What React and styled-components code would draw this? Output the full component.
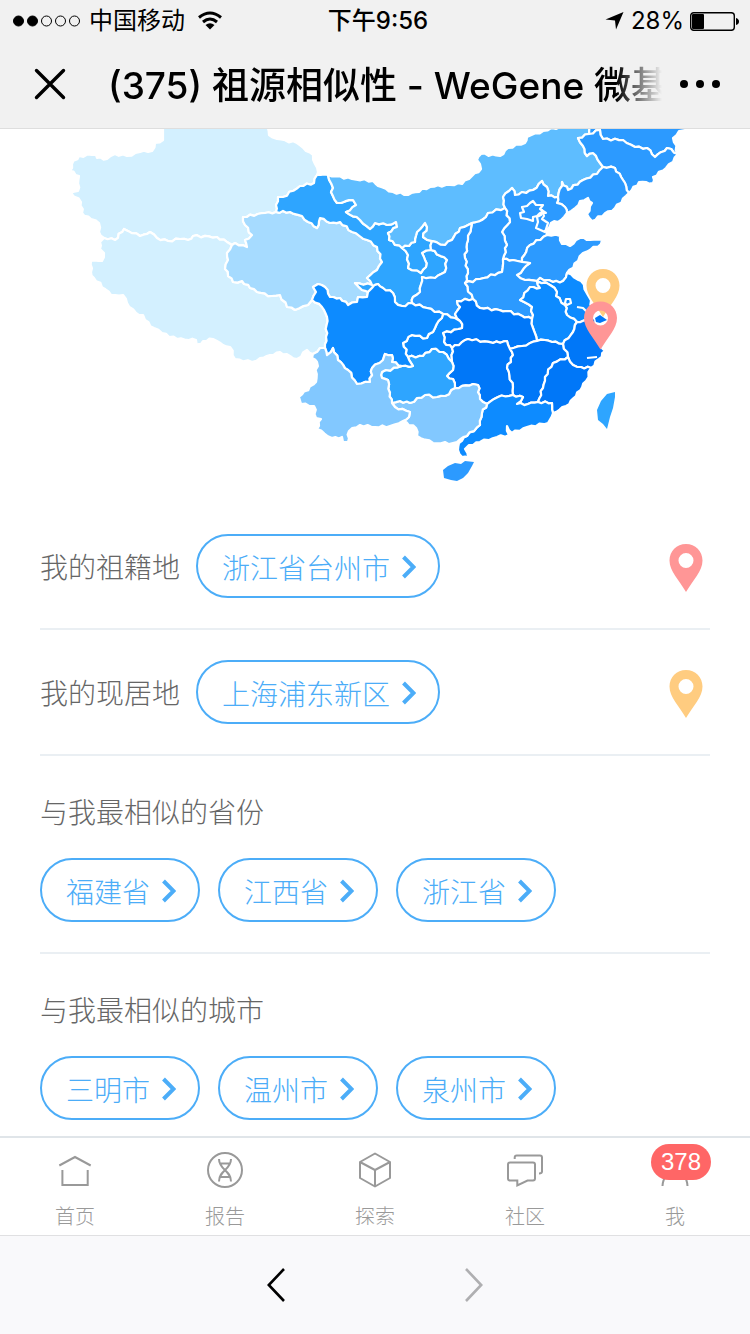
import React from "react";
import styled, { createGlobalStyle, css } from "styled-components";

const GlobalStyle = createGlobalStyle`
  * {
    box-sizing: border-box;
  }

  body {
    margin: 0;
    background: #fff;
    font-family: "Noto Sans CJK SC", sans-serif;
  }

  button {
    padding: 0;
    border: 0;
    background: none;
    font: inherit;
    color: inherit;
    cursor: pointer;
  }

  svg {
    display: block;
    flex-shrink: 0;
  }
`;

const Page = styled.div`
  display: flex;
  flex-direction: column;
  min-height: 100vh;
`;

const Header = styled.header`
  background: #f1f1f1;
  border-bottom: 1px solid #dedede;
  color: #000;
  font-family: "Inter", "Noto Sans CJK SC", sans-serif;
`;

const StatusBar = styled.div`
  display: grid;
  grid-template-columns: 1fr auto 1fr;
  align-items: center;
  height: 40px;
  padding: 2px 11px 0 13px;
  font-size: 24px;
  line-height: 36px;
`;

const StatusGroup = styled.div`
  display: flex;
  align-items: center;
  gap: ${({ $gap }) => $gap}px;
  justify-content: ${({ $end }) => ($end ? "flex-end" : "flex-start")};
`;

const Clock = styled.time`
  padding-left: 4px;
  font-weight: 500;
`;

const TitleBar = styled.div`
  display: flex;
  align-items: center;
  height: 88px;
  padding: 0 30px 0 34px;
`;

const Title = styled.h1`
  flex: 1;
  min-width: 0;
  margin: 0 8px 0 42px;
  padding-top: 4px;
  overflow: hidden;
  white-space: nowrap;
  font-size: 37px;
  font-weight: 500;
  line-height: 56px;
  mask-image: linear-gradient(to right, #000 calc(100% - 56px), transparent calc(100% - 10px));
`;

const Content = styled.main`
  flex: 1;
`;

const MapSvg = styled.svg`
  width: 100%;
  height: auto;
`;

const Section = styled.section`
  margin: 0 40px;
  border-bottom: ${({ $last }) => ($last ? "0" : "2px solid #eaeff3")};
  padding-bottom: ${({ $last }) => ($last ? 16 : 30)}px;
  color: #666;
  font-size: 28px;
  font-weight: 300;
  line-height: 40px;
`;

const PlaceRow = styled(Section)`
  display: flex;
  align-items: center;
  gap: 16px;
  padding: 30px 7px 30px 0;

  > svg {
    margin: 4px 0 0 auto;
  }
`;

const SectionTitle = styled.h2`
  margin: 0;
  padding: 35px 0 27px;
  font: inherit;
`;

const PillList = styled.div`
  display: flex;
  flex-wrap: wrap;
  gap: 18px;
`;

const PillButton = styled.button`
  display: flex;
  align-items: center;
  gap: 12px;
  height: 64px;
  padding: 2px 22px 0 24px;
  border: 2px solid #4cadf8;
  border-radius: 32px;
  color: #4cadf8;
  white-space: nowrap;
`;

const TabBar = styled.nav`
  display: grid;
  grid-template-columns: repeat(5, 1fr);
  border-top: 2px solid #e0e5e9;
  background: #fff;
`;

const Tab = styled.a`
  position: relative;
  display: flex;
  flex-direction: column;
  align-items: center;
  gap: 14px;
  padding: 14px 0 5px;
  color: #999;
  font-size: 20px;
  font-weight: 300;
  line-height: 28px;
  text-decoration: none;
`;

const Badge = styled.span`
  position: absolute;
  top: 6px;
  left: calc(50% - 24px);
  min-width: 60px;
  height: 36px;
  border-radius: 18px;
  background: #f66;
  color: #fff;
  font-family: "Liberation Sans", sans-serif;
  font-size: 24px;
  font-weight: 400;
  line-height: 36px;
  text-align: center;
`;

const HistoryBar = styled.footer`
  display: flex;
  justify-content: center;
  align-items: center;
  gap: 138px;
  height: 99px;
  border-top: 1px solid #e0e0e2;
  background: #f9f9fb;
`;

const HistoryButton = styled.button`
  display: flex;
  justify-content: center;
  align-items: center;
  width: 60px;
  height: 60px;
  color: #000;

  ${({ disabled }) =>
    disabled &&
    css`
      color: #afafb1;
      cursor: default;
    `}
`;

// borders between provinces, each one listed once and shared by both sides
const ARCS = {
  xjOut:
    "317,175 318,172 315,164 313,155 306,151 297,143 277,139 269,135 268,120 163,120 163,140 155,143 152,151 140,152 127,156 115,154 107,159 97,158 96,155 92,155 79,156 72,164 70,171 79,176 78,191 71,193 81,202 82,213 91,219 99,223 99,232 104,238",
  xjXz: "104,238 115,240 124,229 140,236 150,232 157,238 168,241 180,239 188,240 193,236 217,237 227,242 232,245",
  xjQh: "232,245 235,243 247,247 245,240 252,235 245,225 243,217 265,213 276,212",
  xjGs: "276,212 276,205 278,197 283,197 300,186 314,183 317,175",
  xzOut:
    "104,238 100,242 100,249 104,253 102,261 91,261 91,272 94,278 111,295 123,295 127,303 136,313 143,315 145,320 154,328 162,333 177,339 196,340 195,347 203,341 213,339 223,345 230,347 235,359 252,362 260,358 270,355 280,352 297,359 307,350 313,354",
  xzYn: "313,354 320,348 325,348",
  xzSc: "325,348 326,337 327,317 322,307 312,300",
  xzQh: "312,300 308,305 295,310 287,307 280,295 272,296 257,292 250,288 242,281 233,282 225,269 228,260 227,253 232,245",
  qhGs: "276,212 290,212 302,216 308,222 317,228 320,218 330,223 340,222 352,232 367,240 377,247 382,262 377,270 367,278 372,285 355,283 362,290 368,292",
  qhSc: "368,292 367,297 358,297 357,302 348,305 340,298 330,297 325,287 318,284 313,287 316,292 312,300",
  gsTop: "317,175 328,175",
  gsNm: "328,175 333,188 331,192 337,203 353,200 356,205 346,212 360,220 370,229 375,223 387,225 396,222 397,227 388,233 389,240 402,248",
  gsNx: "402,248 408,255 408,268 421,273 426,267 425,260 422,253 431,250",
  gsSn: "431,250 447,260 445,272 435,278 422,277 420,292 413,297 412,303",
  gsSc: "368,292 372,288 378,284 383,288 393,293 395,302 402,306 412,303",
  nxNm: "402,248 415,242 417,232 425,223 427,227 423,237 432,241",
  nxSn: "432,241 431,250",
  nmOut:
    "328,175 352,179 373,181 378,186 393,192 408,195 430,187 446,185 462,184 472,176 481,169 477,160 481,154 500,156 508,148 525,143 527,137 543,131 560,127 560,120 590,120",
  nmHl: "590,120 589,134",
  nmJl: "589,134 578,138 583,146 587,156 593,153 600,163 603,167",
  nmLn: "603,167 597,174 583,180 568,190 562,182 558,197",
  nmHe: "558,197 548,196 547,187 542,181 533,190 515,195 512,188 503,197 505,208",
  nmSx: "505,208 488,213 482,220 472,223",
  nmSn: "472,223 460,228 452,240 445,245 432,241",
  hlOut: "590,120 692,120 692,129 679,131 673,138 678,154",
  hlJl: "589,134 600,130 603,139 623,140 635,147 647,148 655,157 667,148 678,154",
  jlOut: "678,154 673,162 666,168 653,177 653,183 639,182 629,193",
  jlLn: "603,167 615,168 623,180 629,193",
  lnOut: "629,193 615,208 592,221 587,214 592,203 588,198 580,201 575,208 567,213",
  lnHe: "558,197 557,203 565,207 567,213",
  heOut: "567,213 561,220 551,223 546,230 547,235",
  heSd: "547,235 530,245 522,258 522,262",
  heHa: "522,262 513,260 503,259",
  heSx: "503,259 507,245 502,232 510,222 505,208",
  sxSn: "472,223 468,240 465,258 468,273 465,283",
  sxHa: "465,283 480,279 502,272 503,259",
  snHa: "465,283 473,299",
  snHb: "473,299 457,301 460,307 455,314 460,321",
  snCq: "443,314 455,318 460,321",
  snSc: "412,303 427,308 443,314",
  haSd: "522,262 530,263 517,275 525,280 537,281",
  haAh: "537,281 540,288 530,287 520,300 532,307 532,319",
  haHb: "532,319 507,311 480,308 473,299",
  sdOut: "547,235 560,236 562,244 570,246 580,238 590,240 602,240 601,244 583,253 578,261 567,273",
  sdJs: "567,273 563,281 553,282 540,278 537,281",
  jsOut: "567,273 581,281 589,297 593,312",
  jsAh: "537,281 550,285 557,292 556,296 565,305 567,315 577,322",
  jsZj: "577,322 587,320 593,312",
  ahZj: "577,322 573,332 563,344",
  ahJx: "563,344 552,342 545,340 537,341",
  ahHb: "537,341 533,328 532,319",
  hbJx: "537,341 522,346 510,349",
  hbHn: "510,349 507,341 493,343 468,339 452,348",
  cqHb: "460,321 462,328 443,333 444,342 452,348",
  cqHn: "452,348 452,362",
  cqGz: "452,362 443,352 432,349 423,356 408,357",
  cqSc: "408,357 403,343 412,335 427,338 435,328 443,314",
  zjOut: "593,312 595,325 601,345 605,351 599,359 591,368",
  zjFj: "591,368 581,367 573,365 568,357",
  zjJx: "568,357 563,344",
  fjOut: "591,368 586,381 576,396 566,406 553,413",
  fjGd: "553,413 552,403 538,402",
  fjJx: "538,402 543,388 545,377 553,363 568,357",
  jxGd: "538,402 528,404 517,404 523,397 513,395",
  jxHn: "513,395 513,387 507,368 513,355 510,349",
  hnGd: "513,395 498,397 487,404",
  hnGx: "487,404 480,399 478,385 473,384 455,388",
  hnGz: "455,388 453,379 447,376 453,370 452,362",
  gzGx: "455,388 445,396 437,397 425,395 410,403 400,401 392,403",
  gxYn: "392,403 395,407 410,412 409,417 403,421",
  gxOut: "403,421 416,428 417,436 433,443 453,443 467,436",
  gxGd: "467,436 480,425 482,413 487,404",
  gdOut: "553,413 548,423 527,427 512,433 507,426 509,435 497,437 480,442 469,445 465,449 468,458 462,457 458,450 459,443 467,436",
  gzYn: "392,403 390,393 388,380 382,378 382,372 402,366",
  gzSc: "402,366 413,366 408,357",
  scYn: "325,348 327,355 333,348 338,360 348,370 357,384 370,382 372,368 383,360 385,354 392,355 392,362 402,366",
  ynOut:
    "313,354 312,358 317,362 316,382 299,397 301,404 314,406 316,418 321,419 317,429 332,438 342,437 343,442 348,442 349,431 360,425 375,427 390,426 403,421",
};

const PROVINCES = [
  { name: "新疆", fill: "#d3f0ff", arcs: "xjOut xjXz xjQh xjGs" },
  { name: "西藏", fill: "#d3f0ff", arcs: "xzOut xzYn xzSc xzQh -xjXz" },
  { name: "青海", fill: "#a6dbff", arcs: "xjQh qhGs qhSc xzQh" },
  { name: "甘肃", fill: "#2ea5ff", arcs: "xjGs gsTop gsNm gsNx gsSn -gsSc -qhGs" },
  { name: "宁夏", fill: "#2ea5ff", arcs: "nxNm nxSn -gsNx" },
  { name: "内蒙古", fill: "#5ebdff", arcs: "nmOut nmHl nmJl nmLn nmHe nmSx nmSn -nxNm -gsNm" },
  { name: "黑龙江", fill: "#2c9aff", arcs: "hlOut -hlJl -nmHl" },
  { name: "吉林", fill: "#2c9aff", arcs: "hlJl jlOut -jlLn -nmJl" },
  { name: "辽宁", fill: "#2c9aff", arcs: "jlLn lnOut -lnHe -nmLn" },
  { name: "河北", fill: "#2c9aff", arcs: "lnHe heOut heSd heHa heSx -nmHe" },
  { name: "山西", fill: "#2c9aff", arcs: "-heSx -sxHa -sxSn -nmSx" },
  { name: "陕西", fill: "#2c9aff", arcs: "sxSn snHa snHb -snCq -snSc -gsSn -nxSn -nmSn" },
  { name: "山东", fill: "#2c9aff", arcs: "-heSd sdOut sdJs -haSd" },
  { name: "河南", fill: "#2c9aff", arcs: "sxHa -heHa haSd haAh haHb -snHa" },
  { name: "江苏", fill: "#0d8bff", arcs: "-sdJs jsOut -jsZj -jsAh" },
  { name: "安徽", fill: "#0d8bff", arcs: "jsAh ahZj ahJx ahHb -haAh" },
  { name: "浙江", fill: "#0077f8", arcs: "jsZj zjOut zjFj zjJx -ahZj" },
  { name: "湖北", fill: "#0077f8", arcs: "-haHb -ahHb hbJx hbHn -cqHb -snHb" },
  { name: "重庆", fill: "#0d8bff", arcs: "snCq cqHb cqHn cqGz cqSc" },
  { name: "湖南", fill: "#0077f8", arcs: "-hbHn -jxHn hnGd hnGx hnGz -cqHn" },
  { name: "江西", fill: "#0077f8", arcs: "-ahJx -zjJx -fjJx jxGd jxHn -hbJx" },
  { name: "福建", fill: "#0077f8", arcs: "-zjFj fjOut fjGd fjJx" },
  { name: "广东", fill: "#0d8bff", arcs: "jxGd hnGd -gxGd -gdOut fjGd" },
  { name: "广西", fill: "#82c8ff", arcs: "gxGd hnGx gzGx gxYn gxOut" },
  { name: "贵州", fill: "#2ea5ff", arcs: "-cqGz -hnGz gzGx gzYn gzSc" },
  { name: "四川", fill: "#0d8bff", arcs: "-xzSc scYn gzSc cqSc -snSc -gsSc qhSc" },
  { name: "云南", fill: "#82c8ff", arcs: "-xzYn ynOut -gxYn gzYn -scYn" },
];

// break long straight segments so the borders look surveyed
const roughen = (points) => {
  const out = [points[0]];
  for (let i = 1; i < points.length; i++) {
    const [x1, y1] = points[i - 1];
    const [x2, y2] = points[i];
    const length = Math.hypot(x2 - x1, y2 - y1);
    const parts = y1 <= 129 || length > 60 ? 1 : Math.max(1, Math.round(length / 4));
    for (let k = 1; k < parts; k++) {
      const t = k / parts;
      const push = Math.sin(x1 * 12.9 + y1 * 7.3 + k * 2.4) * 1.1;
      out.push([
        x1 + (x2 - x1) * t - ((y2 - y1) / length) * push,
        y1 + (y2 - y1) * t + ((x2 - x1) / length) * push,
      ]);
    }
    out.push([x2, y2]);
  }
  return out;
};

const arcPoints = Object.fromEntries(
  Object.entries(ARCS).map(([key, value]) => [
    key,
    roughen(value.split(" ").map((pair) => pair.split(",").map(Number))),
  ])
);

// a leading "-" walks the arc backwards; gzSc, cqSc etc. are stored in ring order
const provincePath = (arcs) => {
  const points = arcs.split(" ").flatMap((key) => {
    return key[0] === "-" ? [...arcPoints[key.slice(1)]].reverse() : arcPoints[key];
  });
  return "M" + points.map(([x, y]) => `${x.toFixed(1)},${y.toFixed(1)}`).join("L") + "Z";
};

const PIN_PATH =
  "M17 0C7.6 0 .5 7.3 .5 16.5C.5 27 10 36 17 48C24 36 33.5 27 33.5 16.5C33.5 7.3 26.4 0 17 0ZM17 9A7.5 7.5 0 1 1 17 24A7.5 7.5 0 1 1 17 9Z";

function Pin({ color }) {
  return (
    <svg width="34" height="48" viewBox="0 0 34 48" aria-hidden="true">
      <path d={PIN_PATH} fill={color} fillRule="evenodd" />
    </svg>
  );
}

function ChinaMap() {
  return (
    <MapSvg viewBox="0 129 750 375" role="img" aria-label="祖源相似性">
      <g stroke="#fff" strokeWidth="2.2" strokeLinejoin="round">
        {PROVINCES.map((province) => (
          <path key={province.name} d={provincePath(province.arcs)} fill={province.fill} />
        ))}
        {/* 北京、天津 */}
        <path
          fill="#2c9aff"
          d="M522 207L527 206L530 203L533 201L536 205L543 205L540 209L546 213L540 213L537 216L533 217L533 221L527 219L521 218L520 213L524 212Z"
        />
        <path fill="#2c9aff" d="M537 217L541 215L542 210L544 216L542 219L548 223L545 232L536 228L538 222Z" />
        {/* 太湖 */}
        <path fill="#0d8bff" d="M565 303L566 299L570 299L571 303L567 305Z" />
        <path fill="none" d="M577 307L583 308L587 312M587 358L597 357" />
      </g>
      <path fill="#2c9aff" d="M443 470L448 466L455 463L461 464L465 461L474 462L472 466L468 473L463 478L457 481L451 480L444 478Z" />
      <path fill="#2ea5ff" d="M615 392L615 397L613 408L610 417L607 429L603 424L598 420L597 410L601 401L607 394Z" />
      <path fill="#0077f8" d="M595 318L600 315L607 320L600 323L596 322Z" />
      <g fillRule="evenodd">
        <path d={PIN_PATH} fill="#ffcc80" transform="translate(586 269)" />
        <path d={PIN_PATH} fill="#ff9696" transform="translate(583.5 301.5)" />
      </g>
    </MapSvg>
  );
}

function Pill({ children }) {
  return (
    <PillButton type="button">
      {children}
      <svg width="14" height="24" viewBox="0 0 14 24" fill="none" stroke="currentColor" strokeWidth="4">
        <path d="M1.5 2L11.5 12L1.5 22" />
      </svg>
    </PillButton>
  );
}

const TABS = [
  {
    label: "首页",
    icon: <path d="M2.3 13.5L18 5L33.7 13.5M5.4 18V33H30.7V18" />,
  },
  {
    label: "报告",
    icon: (
      <>
        <circle cx="18" cy="18" r="17" />
        <path d="M12 7C12 18 24 18 24 29.5M24 7C24 18 12 18 12 29.5M12.5 11.5H23.5M12.5 25H23.5" />
      </>
    ),
  },
  {
    label: "探索",
    icon: <path strokeLinejoin="round" d="M18 1.5L33 10V26L18 34.5L3 26V10ZM3 10L18 18L33 10M18 18V34.5" />,
  },
  {
    label: "社区",
    icon: (
      <path d="M3 10.5H26Q28 10.5 28 12.5V26.5Q28 28.5 26 28.5H20.5L10.3 33.5V28.5H3Q1 28.5 1 26.5V12.5Q1 10.5 3 10.5ZM7.7 7V5.5Q7.7 3.5 9.7 3.5H33Q35 3.5 35 5.5V19.5Q35 21.5 32 21.5" />
    ),
  },
  {
    label: "我",
    badge: 378,
    icon: (
      <>
        <circle cx="18" cy="10" r="7" />
        <path d="M5.5 34C6 25 11 20 18 20S30 25 30.5 34" />
      </>
    ),
  },
];

const SIMILAR = [
  { title: "与我最相似的省份", places: ["福建省", "江西省", "浙江省"] },
  { title: "与我最相似的城市", places: ["三明市", "温州市", "泉州市"] },
];

function App() {
  return (
    <Page>
      <GlobalStyle />
      <Header>
        <StatusBar>
          <StatusGroup $gap={9}>
            <svg width="67" height="12" viewBox="0 0 67 12" stroke="#000" fill="none">
              <circle cx="5.5" cy="6" r="5" fill="#000" />
              <circle cx="19.5" cy="6" r="5" fill="#000" />
              <circle cx="33.5" cy="6" r="5" />
              <circle cx="47.5" cy="6" r="5" />
              <circle cx="61.5" cy="6" r="5" />
            </svg>
            <span>中国移动</span>
            <svg width="32" height="20" viewBox="-4 0 32 20" fill="none" stroke="#000" strokeWidth="3">
              <path d="M1 6.5Q12 -2.5 23 6.5M5 11Q12 5 19 11" />
              <path d="M7.500 14Q12 10.5 16.5 14L12 18.5Z" fill="#000" stroke="none" />
            </svg>
          </StatusGroup>
          <Clock>下午9:56</Clock>
          <StatusGroup $gap={6} $end>
            <svg width="20" height="18" viewBox="0 0 20 18">
              <path d="M18.5 0L11 17.5L10 8.5L.5 7.5Z" />
            </svg>
            <span>28%</span>
            <svg width="49" height="19" viewBox="0 0 49 19">
              <rect x=".7" y=".7" width="43.6" height="17.6" rx="3" fill="none" stroke="#000" strokeWidth="1.4" />
              <rect x="2" y="2" width="12" height="15" rx="1" />
              <path d="M46 6Q49 7 49 9.5Q49 12 46 13Z" />
            </svg>
          </StatusGroup>
        </StatusBar>
        <TitleBar>
          <button type="button" aria-label="关闭">
            <svg width="32" height="32" viewBox="0 0 32 32" stroke="#000" strokeWidth="3.4" strokeLinecap="round">
              <path d="M2.5 2.5L29.5 29.5M29.5 2.5L2.5 29.5" />
            </svg>
          </button>
          <Title>(375) 祖源相似性 - WeGene 微基</Title>
          <button type="button" aria-label="更多">
            <svg width="40" height="8" viewBox="0 0 40 8">
              <circle cx="4" cy="4" r="4" />
              <circle cx="20" cy="4" r="4" />
              <circle cx="36" cy="4" r="4" />
            </svg>
          </button>
        </TitleBar>
      </Header>

      <Content>
        <ChinaMap />
        <PlaceRow>
          <span>我的祖籍地</span>
          <Pill>浙江省台州市</Pill>
          <Pin color="#ff9696" />
        </PlaceRow>
        <PlaceRow>
          <span>我的现居地</span>
          <Pill>上海浦东新区</Pill>
          <Pin color="#ffcc80" />
        </PlaceRow>
        {SIMILAR.map((group, index) => (
          <Section key={group.title} $last={index === SIMILAR.length - 1}>
            <SectionTitle>{group.title}</SectionTitle>
            <PillList>
              {group.places.map((place) => (
                <Pill key={place}>{place}</Pill>
              ))}
            </PillList>
          </Section>
        ))}
      </Content>

      <TabBar>
        {TABS.map((tab) => (
          <Tab key={tab.label} href="#">
            <svg width="36" height="36" viewBox="0 0 36 36" fill="none" stroke="currentColor" strokeWidth="2">
              {tab.icon}
            </svg>
            {tab.label}
            {tab.badge && <Badge>{tab.badge}</Badge>}
          </Tab>
        ))}
      </TabBar>
      <HistoryBar>
        <HistoryButton type="button" aria-label="后退">
          <svg width="18" height="34" viewBox="0 0 18 34" fill="none" stroke="currentColor" strokeWidth="2.6">
            <path d="M17 1L1.8 17L17 33" />
          </svg>
        </HistoryButton>
        <HistoryButton type="button" aria-label="前进" disabled>
          <svg width="18" height="34" viewBox="0 0 18 34" fill="none" stroke="currentColor" strokeWidth="2.6">
            <path d="M1 1L16.2 17L1 33" />
          </svg>
        </HistoryButton>
      </HistoryBar>
    </Page>
  );
}

export default App;
